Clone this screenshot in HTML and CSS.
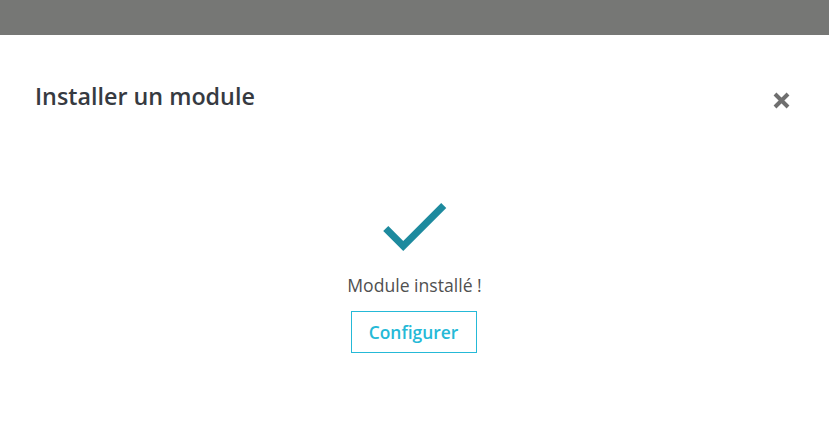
FILE: index.html
```html
<!DOCTYPE html>
<html lang="fr">
<head>
<meta charset="utf-8">
<title>Installer un module</title>
<link rel="stylesheet" href="styles.css">
</head>
<body>
<div class="backdrop"></div>
<div class="modal">
  <div class="modal-header">
    <h2 class="modal-title">Installer un module</h2>
    <button class="close" aria-label="Fermer">
      <svg width="17" height="17" viewBox="0 0 17 17"><path d="M2 2L15 15M15 2L2 15" stroke="#6f6f6f" stroke-width="4" stroke-linecap="butt"/></svg>
    </button>
  </div>
  <div class="modal-body">
    <svg class="check" width="86" height="86" viewBox="0 0 24 24"><path d="M9 16.17L4.83 12l-1.42 1.41L9 19 21 7l-1.41-1.41z" fill="#1d8a9e"/></svg>
    <p class="msg">Module installé !</p>
    <button class="btn-outline">Configurer</button>
  </div>
</div>
</body>
</html>
```
FILE: styles.css
```css
html, body {
  margin: 0;
  padding: 0;
  background: #fff;
  font-family: "Open Sans", "DejaVu Sans", sans-serif;
}
.backdrop {
  height: 35px;
  background: #767775;
}
.modal {
  background: #fff;
}
.modal-header {
  display: flex;
  align-items: center;
  justify-content: space-between;
  padding: 46px 39px 0 35px;
}
.modal-title {
  margin: 0;
  font-size: 23.3px;
  font-weight: 600;
  color: #363a41;
  line-height: 30px;
}
.close {
  border: 0;
  background: none;
  padding: 0;
  margin-top: 8px;
  display: flex;
  cursor: pointer;
}
.modal-body {
  display: flex;
  flex-direction: column;
  align-items: center;
  padding-top: 72px;
}
.check {
  display: block;
  margin-left: -1px;
}
.msg {
  margin: 0;
  margin-top: 5px;
  font-size: 17.6px;
  color: #505050;
  line-height: 22px;
}
.btn-outline {
  margin-top: 15px;
  margin-right: 2px;
  width: 126px;
  height: 42px;
  border: 1px solid #25b9d7;
  background: #fff;
  color: #25b9d7;
  font-family: "Open Sans", sans-serif;
  font-weight: 600;
  font-size: 17.4px;
  padding: 0;
}
```
